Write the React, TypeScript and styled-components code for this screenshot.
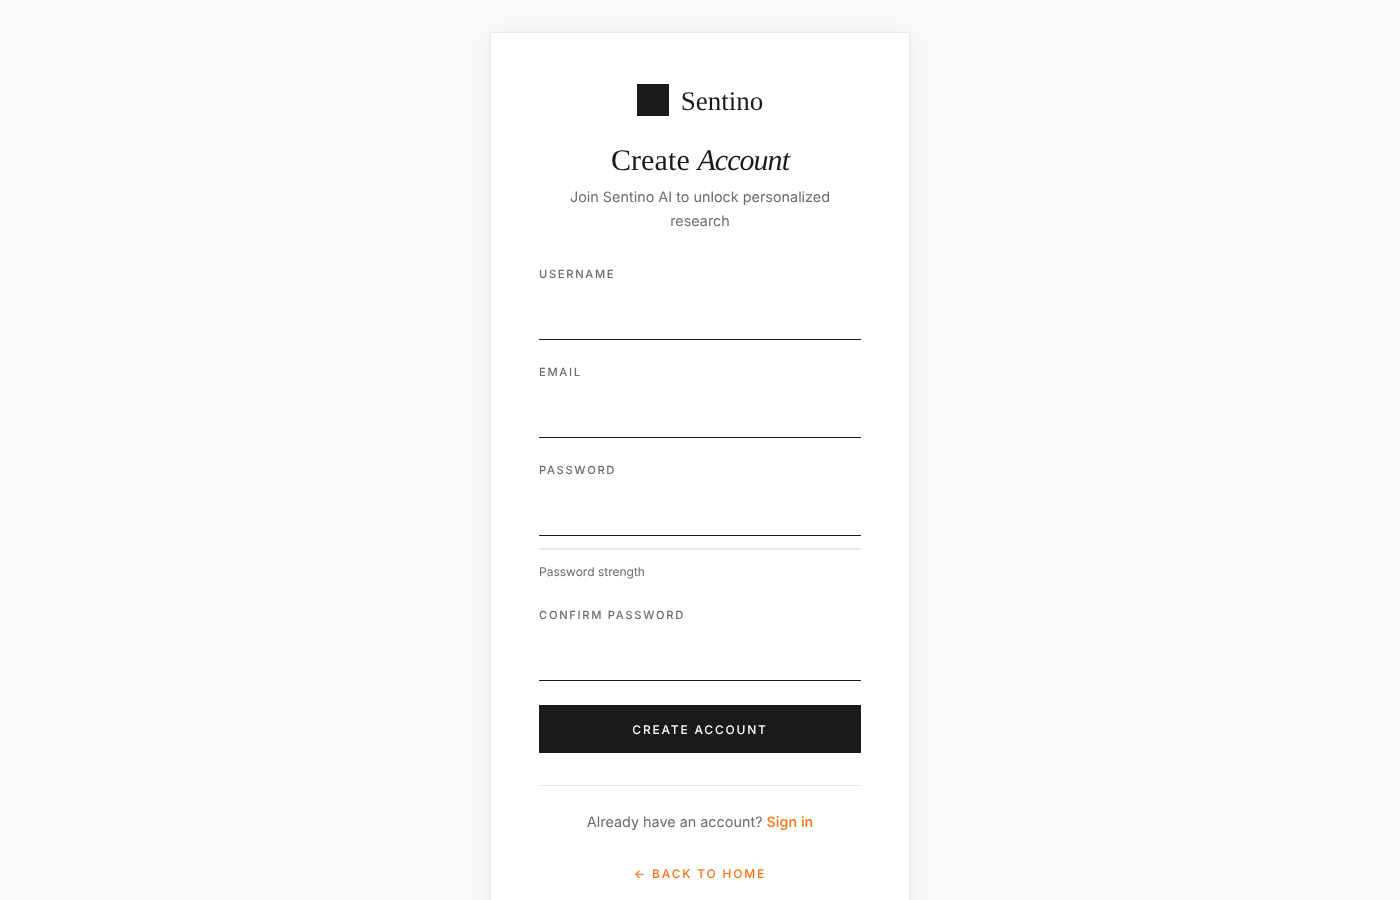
import React from 'react'
import styled, { createGlobalStyle } from 'styled-components'

const GlobalStyle = createGlobalStyle`
	html, body {
		margin: 0;
		padding: 0;
		background: #faf9f7;
		font-family: Inter, 'Liberation Sans', sans-serif;
		color: #1a1a1a;
		text-rendering: geometricPrecision;
	}
	* {
		box-sizing: border-box;
	}
`

const Page = styled.div`
	min-height: 100vh;
	display: flex;
	justify-content: center;
	align-items: flex-start;
	padding: 32px 0;
`

const Card = styled.main`
	width: 420px;
	padding: 48px;
	background: #fff;
	border: 1px solid #e8e8e8;
	box-shadow: 0 4px 24px rgba(0, 0, 0, 0.06);
	will-change: transform;
`

const Brand = styled.div`
	display: flex;
	align-items: center;
	justify-content: center;
	gap: 12px;
	height: 38px;
	margin-bottom: 24px;
`

const BrandMark = styled.div`
	width: 32px;
	height: 32px;
	background: #1a1a1a;
`

const BrandName = styled.span`
	font-family: 'Liberation Serif', serif;
	font-size: 27px;
	line-height: 38px;
	padding-top: 2px;
`

const Title = styled.h1`
	margin: 0 0 7px;
	font-family: 'Liberation Serif', serif;
	font-size: 30px;
	font-weight: 400;
	line-height: 36px;
	letter-spacing: 0.1px;
	text-align: center;

	em {
		font-style: italic;
		letter-spacing: -0.95px;
	}
`

const Subtitle = styled.p`
	margin: 0 0 31px;
	font-size: 14.4px;
	line-height: 24px;
	color: #6b6b6b;
	text-align: center;
`

const Form = styled.form`
	display: flex;
	flex-direction: column;
`

const Field = styled.div`
	display: flex;
	flex-direction: column;
	margin-bottom: 23px;
`

const Label = styled.label`
	font-size: 11.2px;
	line-height: 18px;
	font-weight: 500;
	letter-spacing: 0.15em;
	text-transform: uppercase;
	color: #6b6b6b;
	margin-bottom: 8px;
`

const Input = styled.input`
	height: 49px;
	padding: 12px 0;
	border: 0;
	border-bottom: 1px solid #1a1a1a;
	background: transparent;
	outline: none;
	font: inherit;
`

const StrengthBar = styled.div`
	height: 2px;
	margin-top: 12px;
	background: #e8e8e8;
`

const StrengthLabel = styled.span`
	margin-top: 11px;
	font-size: 12px;
	line-height: 22px;
	color: #6b6b6b;
`

const SubmitButton = styled.button`
	height: 48px;
	margin-top: 1px;
	border: 0;
	background: #1a1a1a;
	color: #fff;
	font-family: inherit;
	font-size: 12px;
	font-weight: 500;
	letter-spacing: 0.15em;
	text-transform: uppercase;
	text-rendering: geometricPrecision;
	cursor: pointer;
`

const Footer = styled.div`
	margin-top: 32px;
	padding-top: 25px;
	border-top: 1px solid #e8e8e8;
	font-size: 14.4px;
	line-height: 24px;
	color: #6b6b6b;
	text-align: center;
`

const SignIn = styled.a`
	color: #f97316;
	font-weight: 500;
	text-decoration: none;
`

const BackLink = styled.a`
	display: block;
	margin-top: 29px;
	font-size: 12px;
	line-height: 20px;
	font-weight: 500;
	letter-spacing: 0.15em;
	text-transform: uppercase;
	text-align: center;
	color: #f97316;
	text-decoration: none;
`

export default function App() {
	return (
		<>
			<GlobalStyle />
			<Page>
				<Card>
					<Brand>
						<BrandMark />
						<BrandName>Sentino</BrandName>
					</Brand>
					<Title>
						Create <em>Account</em>
					</Title>
					<Subtitle>Join Sentino AI to unlock personalized research</Subtitle>
					<Form onSubmit={(e) => e.preventDefault()}>
						<Field>
							<Label htmlFor="username">Username</Label>
							<Input id="username" type="text" />
						</Field>
						<Field>
							<Label htmlFor="email">Email</Label>
							<Input id="email" type="email" />
						</Field>
						<Field>
							<Label htmlFor="password">Password</Label>
							<Input id="password" type="password" />
							<StrengthBar />
							<StrengthLabel>Password strength</StrengthLabel>
						</Field>
						<Field>
							<Label htmlFor="confirm">Confirm Password</Label>
							<Input id="confirm" type="password" />
						</Field>
						<SubmitButton type="submit">Create Account</SubmitButton>
					</Form>
					<Footer>
						Already have an account? <SignIn href="#">Sign in</SignIn>
					</Footer>
					<BackLink href="#">← Back to Home</BackLink>
				</Card>
			</Page>
		</>
	)
}
